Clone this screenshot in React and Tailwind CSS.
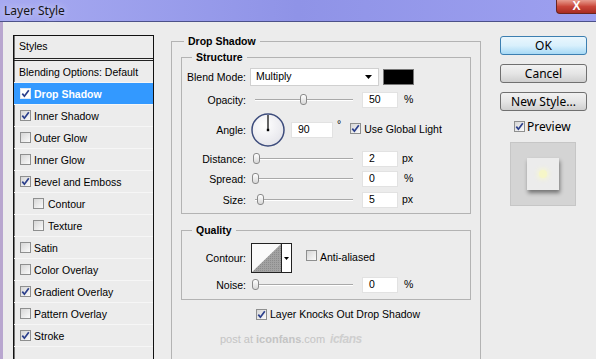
import React from "react";

const Check = ({ checked, light }) => (
  <span
    className={
      light
        ? "inline-flex items-center justify-center w-[11px] h-[11px] shrink-0 border border-[#dfe9f5] bg-white"
        : "inline-flex items-center justify-center w-[11px] h-[11px] shrink-0 border border-[#8e8f8f] bg-gradient-to-br from-[#d6d6d6] to-[#fbfbfb]"
    }
  >
    {checked && (
      <svg width="9" height="9" viewBox="0 0 9 9">
        <path d="M1.3 4.6 L3.4 7.2 L7.8 1.2" stroke="#2b3f8c" strokeWidth="1.7" fill="none" />
      </svg>
    )}
  </span>
);

const Slider = ({ pos }) => (
  <div className="relative w-[101px] h-[12px] ml-[6px] shrink-0">
    <div className="absolute left-[3px] right-0 top-[5px] h-[2px] border-t border-[#a9a9a9] bg-white" />
    <div
      className="absolute top-0 w-[7px] h-[11px] rounded-[3px] border border-[#8a8a8a] bg-gradient-to-b from-white to-[#d8d8d8]"
      style={{ left: pos }}
    />
  </div>
);

const Input = ({ value, w = "w-[36px]", ml = "ml-[9px]" }) => (
  <div className={`${w} ${ml} h-[16px] shrink-0 bg-white border border-[#e2e2e2] flex items-center pl-[6px]`}>
    {value}
  </div>
);

const Label = ({ children }) => (
  <div className="w-[64px] shrink-0 text-right leading-[14px] whitespace-nowrap">{children}</div>
);

const rows = [
  { t: "Blending Options: Default", head: true },
  { t: "Drop Shadow", c: true, sel: true },
  { t: "Inner Shadow", c: true },
  { t: "Outer Glow" },
  { t: "Inner Glow" },
  { t: "Bevel and Emboss", c: true },
  { t: "Contour", ind: true },
  { t: "Texture", ind: true },
  { t: "Satin" },
  { t: "Color Overlay" },
  { t: "Gradient Overlay", c: true },
  { t: "Pattern Overlay" },
  { t: "Stroke", c: true },
  { t: "" },
];

export default function App() {
  return (
    <div className="w-[596px] h-[359px] overflow-hidden bg-[#ececec] font-['Liberation_Sans',Arial,sans-serif] text-[10.5px] text-black">
      {/* Title bar */}
      <div className="h-[22px] flex items-start bg-gradient-to-r from-[#a7aaf1] via-[#8f93e7] to-[#9da0f0] border-b border-[#4c5189]">
        <span className="ml-[4px] mt-[3px] text-[12px] leading-[16px] font-['Noto_Sans',sans-serif] text-[#151515] [text-shadow:0_0_6px_#e8e8ff]">
          Layer Style
        </span>
        <div className="ml-auto w-[40px] h-[14px] rounded-bl-[4px] border border-t-0 border-r-0 border-[#6a2520] bg-gradient-to-b from-[#e69b8f] via-[#c9463a] to-[#a92b22] flex items-start justify-center">
          <span className="text-white font-bold text-[12px] leading-[12px] font-['Liberation_Sans',sans-serif]">X</span>
        </div>
      </div>

      {/* Body */}
      <div className="flex items-start h-[337px] border-l-[3px] border-[#b8a6cf]">
        {/* Left styles list */}
        <div className="ml-[10px] mt-[13px] w-[141px] h-[330px] shrink-0 border border-[#111] shadow-[inset_1px_0_0_#777]">
          <div className="h-[25px] border-b-[3px] border-double border-[#222] flex items-center pl-[5px]">
            Styles
          </div>
          {rows.map((r, i) => (
            <div
              key={i}
              className={
                r.sel
                  ? "h-[22px] border-b border-[#f6f6f6] bg-[#3399ff] text-white font-bold flex items-center pl-[6px] gap-[3px]"
                  : r.head
                  ? "h-[22px] border-b border-[#f6f6f6] flex items-center pl-[5px]"
                  : r.ind
                  ? "h-[22px] border-b border-[#f6f6f6] flex items-center pl-[19px] gap-[4px]"
                  : "h-[22px] border-b border-[#f6f6f6] flex items-center pl-[6px] gap-[3px]"
              }
            >
              {!r.head && r.t && <Check checked={r.c} light={r.sel} />}
              <span className="leading-[14px] whitespace-nowrap">{r.t}</span>
            </div>
          ))}
        </div>

        {/* Middle */}
        <fieldset className="ml-[17px] mt-[12px] w-[309px] h-[340px] shrink-0 border border-[#b3b3b3] px-[9px]">
          <legend className="ml-[3px] px-[4px] font-bold leading-[14px]">Drop Shadow</legend>

          <fieldset className="mt-[2px] w-[290px] border border-[#b3b3b3] pb-[5px]">
            <legend className="ml-[10px] px-[4px] font-bold leading-[14px]">Structure</legend>

            {/* Blend mode */}
            <div className="mt-[4px] h-[18px] flex items-center">
              <Label>Blend Mode:</Label>
              <div className="ml-[4px] w-[129px] h-[18px] bg-white border border-[#d0d0d0] flex items-center pl-[5px] pr-[6px]">
                <span>Multiply</span>
                <svg className="ml-auto" width="7" height="4" viewBox="0 0 7 4">
                  <path d="M0 0 H7 L3.5 4 Z" fill="#000" />
                </svg>
              </div>
              <div className="ml-[4px] w-[31px] h-[16px] bg-black border border-[#777]" />
            </div>

            {/* Opacity */}
            <div className="mt-[6px] h-[16px] flex items-center">
              <Label>Opacity:</Label>
              <Slider pos={48} />
              <Input value="50" />
              <span className="ml-[6px]">%</span>
            </div>

            {/* Angle */}
            <div className="mt-[5px] h-[34px] flex items-center">
              <Label>Angle:</Label>
              <svg className="ml-[5px] shrink-0" width="34" height="34" viewBox="0 0 34 34">
                <defs>
                  <radialGradient id="dial" cx="40%" cy="35%" r="70%">
                    <stop offset="0%" stopColor="#ffffff" />
                    <stop offset="100%" stopColor="#e4e4ea" />
                  </radialGradient>
                </defs>
                <circle cx="17" cy="17" r="16" fill="url(#dial)" stroke="#3d4c7c" strokeWidth="1.5" />
                <line x1="17" y1="2" x2="17" y2="17" stroke="#000" strokeWidth="1.2" />
                <rect x="15.8" y="15.8" width="2.4" height="2.4" fill="#000" />
              </svg>
              <Input value="90" w="w-[42px]" ml="ml-[6px]" />
              <span className="ml-[4px] self-start mt-[6px] leading-[10px]">°</span>
              <span className="ml-[9px]"><Check checked /></span>
              <span className="ml-[3px] whitespace-nowrap">Use Global Light</span>
            </div>

            {/* Distance */}
            <div className="mt-[4px] h-[16px] flex items-center">
              <Label>Distance:</Label>
              <Slider pos={1} />
              <Input value="2" />
              <span className="ml-[4px]">px</span>
            </div>
            {/* Spread */}
            <div className="mt-[4px] h-[16px] flex items-center">
              <Label>Spread:</Label>
              <Slider pos={0} />
              <Input value="0" />
              <span className="ml-[6px]">%</span>
            </div>
            {/* Size */}
            <div className="mt-[5px] h-[16px] flex items-center">
              <Label>Size:</Label>
              <Slider pos={5} />
              <Input value="5" />
              <span className="ml-[4px]">px</span>
            </div>
          </fieldset>

          <fieldset className="mt-[9px] w-[290px] border border-[#b3b3b3] pb-[6px]">
            <legend className="ml-[10px] px-[4px] font-bold leading-[14px]">Quality</legend>
            <div className="mt-[6px] h-[30px] flex items-center">
              <Label>Contour:</Label>
              <div className="ml-[5px] w-[41px] h-[30px] border border-[#222] flex bg-white shrink-0">
                <svg width="29" height="28" viewBox="0 0 29 28">
                  <defs>
                    <pattern id="dots" width="2" height="2" patternUnits="userSpaceOnUse">
                      <rect width="2" height="2" fill="#a2a2a2" />
                      <rect width="1" height="1" fill="#8c8c8c" />
                    </pattern>
                  </defs>
                  <rect width="29" height="28" fill="#fafafa" />
                  <path d="M0 28 L29 0 L29 28 Z" fill="url(#dots)" />
                </svg>
                <div className="flex-1 border-l border-[#222] flex items-center justify-center">
                  <svg width="5" height="3" viewBox="0 0 5 3">
                    <path d="M0 0 H5 L2.5 3 Z" fill="#000" />
                  </svg>
                </div>
              </div>
              <span className="ml-[14px]"><Check /></span>
              <span className="ml-[3px]">Anti-aliased</span>
            </div>
            <div className="mt-[4px] h-[16px] flex items-center">
              <Label>Noise:</Label>
              <Slider pos={0} />
              <Input value="0" />
              <span className="ml-[6px]">%</span>
            </div>
          </fieldset>

          <div className="mt-[8px] h-[13px] flex items-center ml-[75px]">
            <Check checked />
            <span className="ml-[3px] whitespace-nowrap">Layer Knocks Out Drop Shadow</span>
          </div>

          <div className="mt-[12px] ml-[39px] flex items-center text-[11px] leading-[12px] text-[#c4c4c4] whitespace-nowrap">
            <span>post at </span>
            <span className="ml-[3px] font-bold">iconfans</span>
            <span>.com</span>
            <span className="ml-[5px] italic font-bold text-[12px] text-[#cfcfcf] tracking-[-0.5px]">icfans</span>
          </div>
        </fieldset>

        {/* Right column */}
        <div className="ml-[19px] mt-[14px] w-[87px] shrink-0 flex flex-col font-['Noto_Sans',sans-serif] text-[12px]">
          <div className="h-[19px] rounded-[3px] border border-[#3c7fb1] bg-gradient-to-b from-[#eaf6fd] via-[#d9f0fc] to-[#a7d9f5] flex items-center justify-center leading-[14px]">
            OK
          </div>
          <div className="mt-[9px] h-[19px] rounded-[3px] border border-[#707070] bg-gradient-to-b from-[#f2f2f2] via-[#e5e5e5] to-[#cfcfcf] flex items-center justify-center leading-[14px]">
            Cancel
          </div>
          <div className="mt-[9px] h-[19px] rounded-[3px] border border-[#707070] bg-gradient-to-b from-[#f2f2f2] via-[#e5e5e5] to-[#cfcfcf] flex items-center justify-center leading-[14px]">
            New Style...
          </div>
          <div className="mt-[9px] h-[13px] flex items-center ml-[14px]">
            <Check checked />
            <span className="ml-[2px] leading-[14px]">Preview</span>
          </div>
          <div className="mt-[9px] ml-[10px] w-[66px] h-[64px] bg-[#d4d4d4] border border-[#c6c6c6] flex items-center justify-center">
            <div className="w-[32px] h-[32px] bg-[#ececec] shadow-[1px_3px_4px_rgba(0,0,0,0.45)] flex items-center justify-center">
              <div className="w-[8px] h-[8px] rounded-full bg-[#f6f6c8] shadow-[0_0_4px_2px_#f4f4d4]" />
            </div>
          </div>
        </div>
      </div>
    </div>
  );
}
